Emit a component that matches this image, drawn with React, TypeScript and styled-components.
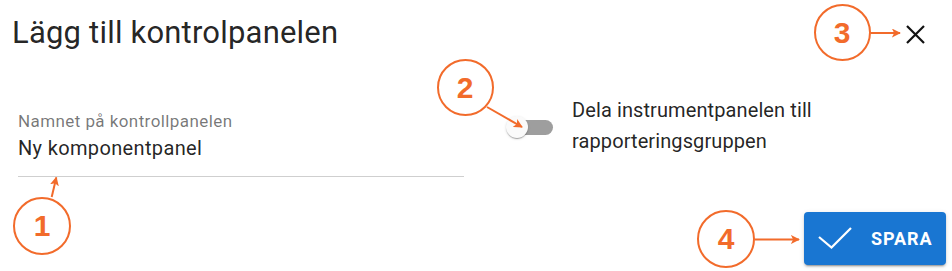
import React from "react";
import styled, { createGlobalStyle } from "styled-components";

const ORANGE = "#f26b2b";

const Global = createGlobalStyle`
  html, body { margin: 0; padding: 0; background: #fff; }
  body { font-family: Roboto, "Noto Sans", Arial, sans-serif; color: rgba(0,0,0,0.87); }
  * { box-sizing: border-box; }
`;

const Dialog = styled.div`
  position: relative;
  width: 952px;
  height: 271px;
  display: flex;
  flex-direction: column;
  background: #fff;
  overflow: hidden;
`;

const Header = styled.header`
  height: 95px;
  display: flex;
  justify-content: space-between;
  align-items: flex-start;
  padding: 15px 27px 0 12px;
`;

const Title = styled.h2`
  margin: 0;
  font-size: 31px;
  line-height: 36px;
  font-weight: 400;
  letter-spacing: 0.2px;
  color: rgba(0, 0, 0, 0.87);
`;

const CloseButton = styled.button`
  margin-top: 10px;
  width: 19px;
  height: 19px;
  padding: 0;
  border: 0;
  background: transparent;
  display: flex;
  color: #111;
`;

const Body = styled.section`
  display: flex;
  align-items: flex-start;
  padding-left: 18px;
`;

const Field = styled.div`
  width: 446px;
  margin-top: 16px;
  display: flex;
  flex-direction: column;
  border-bottom: 1.5px solid #cfcfcf;
  padding-bottom: 14.5px;
`;

const FieldLabel = styled.label`
  font-size: 17px;
  line-height: 20px;
  letter-spacing: 0.42px;
  color: rgba(0, 0, 0, 0.54);
`;

const FieldValue = styled.div`
  margin-top: 4px;
  font-size: 20px;
  line-height: 26px;
  letter-spacing: 0.35px;
  color: rgba(0, 0, 0, 0.87);
`;

const ShareGroup = styled.div`
  display: flex;
  align-items: center;
  margin-left: 41px;
`;

const Switch = styled.div`
  position: relative;
  width: 48px;
  height: 24px;
  display: flex;
  align-items: center;
  margin-top: 2px;
`;

const Track = styled.div`
  margin-left: 6px;
  width: 42px;
  height: 15px;
  border-radius: 8px;
  background: #9e9e9e;
`;

const Thumb = styled.div`
  position: absolute;
  left: 1px;
  top: 1px;
  width: 22px;
  height: 22px;
  border-radius: 50%;
  background: #fafafa;
  box-shadow: 0 2px 1px -1px rgba(0,0,0,0.2), 0 1px 1px 0 rgba(0,0,0,0.14), 0 1px 3px 0 rgba(0,0,0,0.12);
`;

const ShareText = styled.div`
  margin-left: 19px;
  font-size: 20px;
  line-height: 31px;
  letter-spacing: 0.1px;
  color: rgba(0, 0, 0, 0.87);
`;

const Footer = styled.footer`
  display: flex;
  justify-content: flex-end;
  padding-right: 6px;
  margin-top: 35px;
`;

const SaveButton = styled.button`
  width: 142px;
  height: 53px;
  border: 0;
  border-radius: 4px;
  background: #1976d2;
  color: #fff;
  display: flex;
  align-items: center;
  gap: 19px;
  padding: 0 0 0 14px;
  font-family: Roboto, Arial, sans-serif;
  font-size: 18px;
  font-weight: 700;
  letter-spacing: 0.9px;
  box-shadow: 0 3px 1px -2px rgba(0,0,0,0.2), 0 2px 2px 0 rgba(0,0,0,0.14), 0 1px 5px 0 rgba(0,0,0,0.12);
`;

const Overlay = styled.svg`
  position: absolute;
  inset: 0;
  pointer-events: none;
`;

const Callout = styled.div<{ $x: number; $y: number; $d: number }>`
  position: absolute;
  left: ${(p) => p.$x - p.$d / 2}px;
  top: ${(p) => p.$y - p.$d / 2}px;
  width: ${(p) => p.$d}px;
  height: ${(p) => p.$d}px;
  border: 2px solid ${ORANGE};
  border-radius: 50%;
  background: #fff;
  display: flex;
  align-items: center;
  justify-content: center;
  color: ${ORANGE};
  font-family: "Liberation Sans", Arial, sans-serif;
  font-weight: 700;
  font-size: 30px;
  line-height: 1;
`;

const arrows: [number, number, number, number][] = [
  [51.7, 197, 56.3, 177.5],
  [487, 107, 522, 127],
  [870.5, 33, 900, 33],
  [755, 239.5, 799, 239.5],
];

const callouts = [
  { n: "1", x: 42, y: 225.5, d: 58 },
  { n: "2", x: 465, y: 87.5, d: 57 },
  { n: "3", x: 842, y: 32.5, d: 57 },
  { n: "4", x: 726, y: 238.5, d: 58 },
];

export default function App() {
  return (
    <>
      <Global />
      <Dialog>
        <Header>
          <Title>Lägg till kontrolpanelen</Title>
          <CloseButton aria-label="Stäng">
            <svg width="19" height="19" viewBox="0 0 19 19">
              <path d="M1 1L18 18M18 1L1 18" stroke="currentColor" strokeWidth="2.2" fill="none" />
            </svg>
          </CloseButton>
        </Header>
        <Body>
          <Field>
            <FieldLabel>Namnet på kontrollpanelen</FieldLabel>
            <FieldValue>Ny komponentpanel</FieldValue>
          </Field>
          <ShareGroup>
            <Switch>
              <Track />
              <Thumb />
            </Switch>
            <ShareText>
              Dela instrumentpanelen till
              <br />
              rapporteringsgruppen
            </ShareText>
          </ShareGroup>
        </Body>
        <Footer>
          <SaveButton>
            <svg width="34" height="22" viewBox="0 0 34 22">
              <polyline points="1,10 13.5,20.5 33,1" stroke="#fff" strokeWidth="2.2" fill="none" />
            </svg>
            SPARA
          </SaveButton>
        </Footer>
        <Overlay width="952" height="271" viewBox="0 0 952 271">
          <defs>
            <marker id="ah" viewBox="0 0 10 10" refX="9" refY="5" markerWidth="4.5" markerHeight="4.5" orient="auto">
              <path d="M0,0 L10,5 L0,10 L2.5,5 z" fill={ORANGE} />
            </marker>
          </defs>
          {arrows.map(([x1, y1, x2, y2], i) => (
            <line key={i} x1={x1} y1={y1} x2={x2} y2={y2} stroke={ORANGE} strokeWidth="2" markerEnd="url(#ah)" />
          ))}
        </Overlay>
        {callouts.map((c) => (
          <Callout key={c.n} $x={c.x} $y={c.y} $d={c.d}>
            {c.n}
          </Callout>
        ))}
      </Dialog>
    </>
  );
}
